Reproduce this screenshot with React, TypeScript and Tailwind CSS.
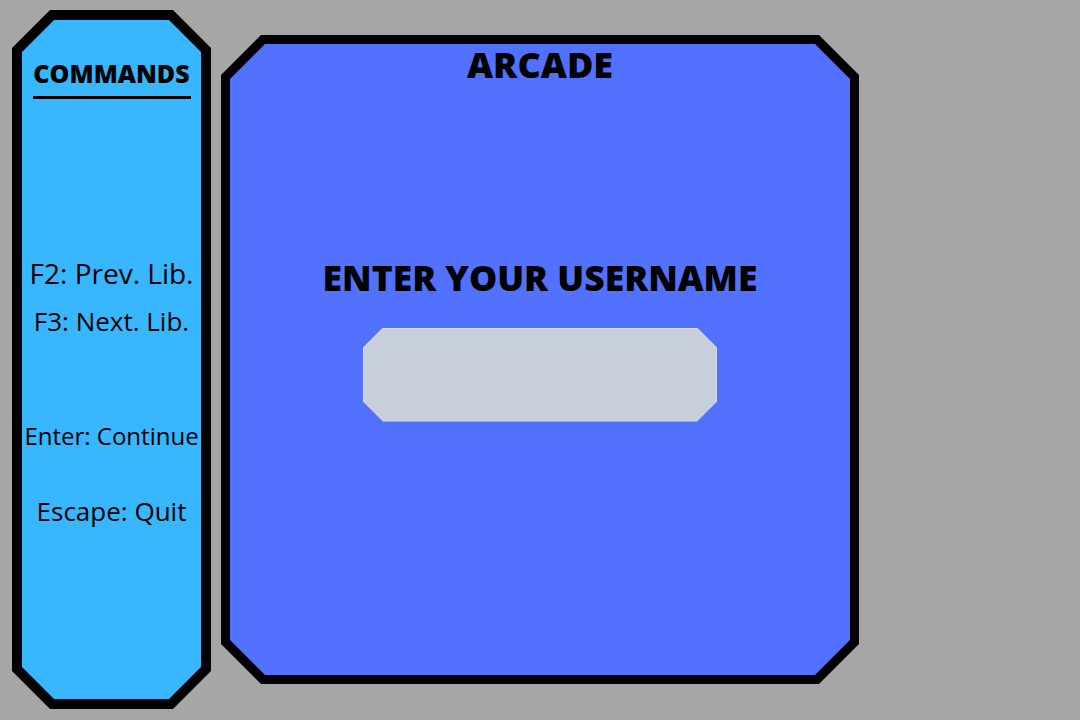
import React from 'react';

// octagon shapes, corner cuts in px
const leftOuter =
  '[clip-path:polygon(38px_0,calc(100%_-_38px)_0,100%_38px,100%_calc(100%_-_38px),calc(100%_-_38px)_100%,38px_100%,0_calc(100%_-_38px),0_38px)]';
const leftInner =
  '[clip-path:polygon(32px_0,calc(100%_-_32px)_0,100%_32px,100%_calc(100%_-_32px),calc(100%_-_32px)_100%,32px_100%,0_calc(100%_-_32px),0_32px)]';
const mainOuter =
  '[clip-path:polygon(40px_0,calc(100%_-_40px)_0,100%_40px,100%_calc(100%_-_40px),calc(100%_-_40px)_100%,40px_100%,0_calc(100%_-_40px),0_40px)]';

const App: React.FC = () => {
  const commands = [
    { label: 'F2: Prev. Lib.', cls: 'mt-[160px] text-[28px]' },
    { label: 'F3: Next. Lib.', cls: 'mt-[21px] text-[26px]' },
    { label: 'Enter: Continue', cls: 'mt-[90px] text-[24px]' },
    { label: 'Escape: Quit', cls: 'mt-[50px] text-[26px]' },
  ];

  return (
    <div className="w-[1080px] h-[720px] bg-[#a6a6a6] font-['Open_Sans',sans-serif] text-black flex items-start gap-[10px] pl-[12px] pt-[10px] overflow-hidden">
      {/* commands panel */}
      <div className={`w-[199px] h-[699px] bg-black p-[10px] ${leftOuter}`}>
        <div
          className={`w-full h-full bg-[#38b6ff] flex flex-col items-center ${leftInner}`}
        >
          <h2 className="mt-[41px] text-[25px] leading-none font-extrabold">COMMANDS</h2>
          <div className="mt-[10px] w-[158px] h-[3px] bg-black" />
          {commands.map((c) => (
            <p key={c.label} className={`leading-none whitespace-nowrap ${c.cls}`}>
              {c.label}
            </p>
          ))}
        </div>
      </div>

      {/* arcade panel */}
      <div className={`mt-[25px] w-[638px] h-[649px] bg-black p-[9px] ${mainOuter}`}>
        <div className="w-full h-full bg-[#5271ff] flex flex-col items-center [clip-path:polygon(35px_0,calc(100%_-_35px)_0,100%_35px,100%_calc(100%_-_35px),calc(100%_-_35px)_100%,35px_100%,0_calc(100%_-_35px),0_35px)]">
          <h1 className="mt-[3px] text-[36px] leading-none font-extrabold">ARCADE</h1>
          <h2 className="mt-[177px] text-[35.5px] leading-none font-extrabold">ENTER YOUR USERNAME</h2>
          <div className="mt-[32px] w-[354px] h-[94px] bg-[#d3daea] p-px [clip-path:polygon(20px_0,calc(100%_-_20px)_0,100%_20px,100%_calc(100%_-_20px),calc(100%_-_20px)_100%,20px_100%,0_calc(100%_-_20px),0_20px)]">
            <div className="w-full h-full bg-[#c6cfda] [clip-path:polygon(19px_0,calc(100%_-_19px)_0,100%_19px,100%_calc(100%_-_19px),calc(100%_-_19px)_100%,19px_100%,0_calc(100%_-_19px),0_19px)]" />
          </div>
        </div>
      </div>
    </div>
  );
};

export default App;
